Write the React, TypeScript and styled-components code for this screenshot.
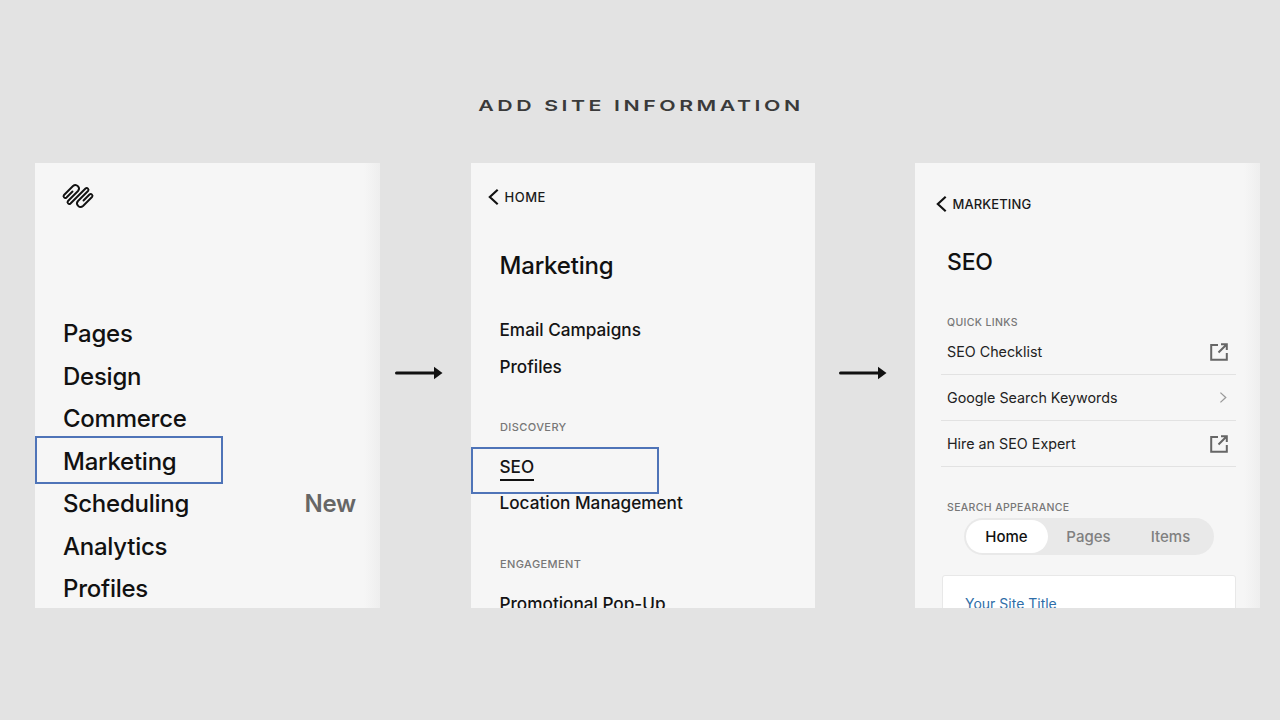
import React from "react";
import styled, { createGlobalStyle } from "styled-components";

const Global = createGlobalStyle`
  html, body { margin: 0; padding: 0; background: #e3e3e3; }
  body { font-family: Inter, "Liberation Sans", sans-serif; color: #111; -webkit-font-smoothing: antialiased; }
`;

const Stage = styled.div`
  width: 1280px;
  height: 720px;
  overflow: hidden;
  background: #e3e3e3;
  display: flex;
  flex-direction: column;
`;

const Heading = styled.h1`
  margin: 97px 0 0 2px;
  height: 18px;
  line-height: 18px;
  text-align: center;
  font-size: 15px;
  font-weight: 600;
  letter-spacing: 2.5px;
  color: #3a3a3a;
  transform: scaleX(1.42);
`;

const Row = styled.div`
  display: flex;
  margin-top: 48px;
  padding-left: 35px;
`;

const Panel = styled.section<{ $w: number; $shade?: boolean }>`
  position: relative;
  width: ${(p) => p.$w}px;
  height: 445px;
  overflow: hidden;
  flex: none;
  display: flex;
  flex-direction: column;
  background: ${(p) =>
    p.$shade
      ? "linear-gradient(to right, #f6f6f6 calc(100% - 16px), #eeeeee 100%)"
      : "#f6f6f6"};
`;

const ArrowSlot = styled.div<{ $w: number; $pad: number }>`
  width: ${(p) => p.$w}px;
  padding: 0 0 26px ${(p) => p.$pad}px;
  box-sizing: border-box;
  flex: none;
  display: flex;
  align-items: center;
`;

const Logo = styled.svg`
  display: block;
  margin: 21px 0 0 28px;
  width: 30px;
  height: 24px;
  flex: none;
  overflow: visible;
`;

const MainNav = styled.nav`
  margin-top: 104.5px;
  padding: 0 24px 0 28px;
  display: flex;
  flex-direction: column;
`;

const MainItem = styled.div`
  position: relative;
  flex: none;
  height: 42.5px;
  display: flex;
  align-items: center;
  justify-content: space-between;
  font-size: 24px;
  font-weight: 500;
  letter-spacing: -0.25px;
  color: #111;
`;

const NewTag = styled.span`
  color: #666;
  font-weight: 600;
`;

const Highlight = styled.span<{ $left: number; $top: number; $h: number }>`
  position: absolute;
  left: ${(p) => p.$left}px;
  top: ${(p) => p.$top}px;
  width: 188px;
  height: ${(p) => p.$h}px;
  box-sizing: border-box;
  border: 2px solid #4f74b8;
  pointer-events: none;
`;

const BackRow = styled.div<{ $top: number; $left: number; $spacing: number }>`
  margin: ${(p) => p.$top}px 0 0 ${(p) => p.$left}px;
  height: 20px;
  flex: none;
  display: flex;
  align-items: center;
  gap: 4px;
  font-size: 13px;
  font-weight: 500;
  letter-spacing: ${(p) => p.$spacing}px;
  color: #1a1a1a;
`;

const PanelTitle = styled.h2<{ $top: number; $left: number; $size: number }>`
  margin: ${(p) => p.$top}px 0 0 ${(p) => p.$left}px;
  height: 30px;
  line-height: 30px;
  flex: none;
  font-size: ${(p) => p.$size}px;
  font-weight: 500;
  letter-spacing: -0.2px;
  color: #111;
`;

const SubItem = styled.div<{ $top?: number }>`
  position: relative;
  margin: ${(p) => p.$top ?? 0}px 0 0 28.5px;
  height: 36.5px;
  line-height: 36.5px;
  flex: none;
  font-size: 17.2px;
  font-weight: 500;
  color: #141414;
`;

const Underlined = styled.span`
  display: inline-block;
  line-height: 24px;
  border-bottom: 2px solid #111;
`;

const SectionLabel = styled.div<{ $top: number; $left: number; $small?: boolean }>`
  margin: ${(p) => p.$top}px 0 0 ${(p) => p.$left}px;
  height: 14px;
  line-height: 14px;
  flex: none;
  font-size: ${(p) => (p.$small ? 10.5 : 11)}px;
  font-weight: 500;
  letter-spacing: ${(p) => (p.$small ? 0.35 : 0.4)}px;
  color: #777;
`;

const LinkList = styled.div`
  margin: -1px 24px 0 26px;
  flex: none;
`;

const LinkRow = styled.div`
  height: 46px;
  box-sizing: border-box;
  padding: 0 8px 0 6px;
  display: flex;
  align-items: center;
  justify-content: space-between;
  border-bottom: 1.5px solid #e2e2e2;
  font-size: 14.3px;
  font-weight: 400;
  color: #222;
`;

const Tabs = styled.div`
  margin: 3px 0 0 48.5px;
  width: 250px;
  height: 37px;
  box-sizing: border-box;
  padding: 2px;
  flex: none;
  display: flex;
  border-radius: 19px;
  background: #e9e9e9;
`;

const Tab = styled.div<{ $active?: boolean }>`
  flex: 1;
  display: flex;
  align-items: center;
  justify-content: center;
  border-radius: 17px;
  font-size: 15px;
  font-weight: 500;
  color: ${(p) => (p.$active ? "#111" : "#808080")};
  background: ${(p) => (p.$active ? "#fff" : "transparent")};
`;

const PreviewCard = styled.div`
  margin: 20px 24px 0 27px;
  height: 60px;
  flex: none;
  box-sizing: border-box;
  padding: 18px 0 0 22px;
  background: #fff;
  border: 1px solid #e8e8e8;
  border-radius: 3px;
`;

const SiteTitle = styled.div`
  line-height: 20px;
  font-size: 14px;
  color: #2f6ea8;
`;

const Chevron = ({ dir, color = "#111", size = 18 }: { dir: "l" | "r"; color?: string; size?: number }) => (
  <svg width={size * 0.75} height={size} viewBox="0 0 12 16" fill="none" style={{ flex: "none" }}>
    <path
      d={dir === "l" ? "M9.5 1.5 L2.5 8 L9.5 14.5" : "M3 2 L9.5 8 L3 14"}
      stroke={color}
      strokeWidth={dir === "l" ? 1.9 : 1.6}
    />
  </svg>
);

const External = () => (
  <svg width="18" height="18" viewBox="0 0 18 18" fill="none" style={{ flex: "none" }}>
    <path d="M8 2 H1.2 V16.8 H16.8 V10" stroke="#666" strokeWidth="2" />
    <path d="M8.5 9.5 L15.8 2.2 M11 1.2 H16.8 V7" stroke="#666" strokeWidth="2" />
  </svg>
);

const FlowArrow = () => (
  <svg width="48" height="14" viewBox="0 0 48 14" style={{ display: "block" }}>
    <path d="M1.5 7 H40" stroke="#111" strokeWidth="3" strokeLinecap="round" />
    <path d="M39 0.8 L47.5 7 L39 13.2 Z" fill="#111" />
  </svg>
);

const mainItems = ["Pages", "Design", "Commerce", "Marketing", "Scheduling", "Analytics", "Profiles"];

export default function App() {
  return (
    <Stage>
      <Global />
      <Heading>ADD SITE INFORMATION</Heading>
      <Row>
        <Panel $w={345} $shade>
          <Logo viewBox="0 0 30 24" fill="none" stroke="#111" strokeWidth="1.9" strokeLinecap="round" strokeLinejoin="round">
            <path d="M9.5 7.5 L3.5 13.5 A1.77 1.77 0 0 1 1 11 L10 2 A3.54 3.54 0 0 1 15 7 L5 17 A1.77 1.77 0 0 0 7.5 19.5 L22.5 4.5 A1.77 1.77 0 0 1 25 7 L15 17 A3.54 3.54 0 0 0 20 22 L29 13 A1.77 1.77 0 0 0 26.5 10.5 L20.5 16.5" />
          </Logo>
          <MainNav>
            {mainItems.map((name) => (
              <MainItem key={name}>
                <span>{name}</span>
                {name === "Scheduling" && <NewTag>New</NewTag>}
                {name === "Marketing" && <Highlight $left={-28} $top={-3.75} $h={48} />}
              </MainItem>
            ))}
          </MainNav>
        </Panel>
        <ArrowSlot $w={91} $pad={15}>
          <FlowArrow />
        </ArrowSlot>
        <Panel $w={344}>
          <BackRow $top={24} $left={16} $spacing={0.5}>
            <Chevron dir="l" />
            <span>HOME</span>
          </BackRow>
          <PanelTitle $top={44} $left={28.5} $size={24}>Marketing</PanelTitle>
          <SubItem $top={31}>Email Campaigns</SubItem>
          <SubItem>Profiles</SubItem>
          <SectionLabel $top={35} $left={29}>DISCOVERY</SectionLabel>
          <SubItem $top={15}>
            <Underlined>SEO</Underlined>
            <Highlight $left={-28.5} $top={-2} $h={47} />
          </SubItem>
          <SubItem $top={-1}>Location Management</SubItem>
          <SectionLabel $top={36} $left={29}>ENGAGEMENT</SectionLabel>
          <SubItem $top={15}>Promotional Pop-Up</SubItem>
        </Panel>
        <ArrowSlot $w={100} $pad={24}>
          <FlowArrow />
        </ArrowSlot>
        <Panel $w={345} $shade>
          <BackRow $top={31} $left={20} $spacing={0.1}>
            <Chevron dir="l" />
            <span>MARKETING</span>
          </BackRow>
          <PanelTitle $top={33} $left={32} $size={23}>SEO</PanelTitle>
          <SectionLabel $top={39} $left={32} $small>QUICK LINKS</SectionLabel>
          <LinkList>
            <LinkRow>
              <span>SEO Checklist</span>
              <External />
            </LinkRow>
            <LinkRow>
              <span>Google Search Keywords</span>
              <Chevron dir="r" color="#999" size={13} />
            </LinkRow>
            <LinkRow>
              <span>Hire an SEO Expert</span>
              <External />
            </LinkRow>
          </LinkList>
          <SectionLabel $top={34} $left={32} $small>SEARCH APPEARANCE</SectionLabel>
          <Tabs>
            <Tab $active>Home</Tab>
            <Tab>Pages</Tab>
            <Tab>Items</Tab>
          </Tabs>
          <PreviewCard>
            <SiteTitle>Your Site Title</SiteTitle>
          </PreviewCard>
        </Panel>
      </Row>
    </Stage>
  );
}
